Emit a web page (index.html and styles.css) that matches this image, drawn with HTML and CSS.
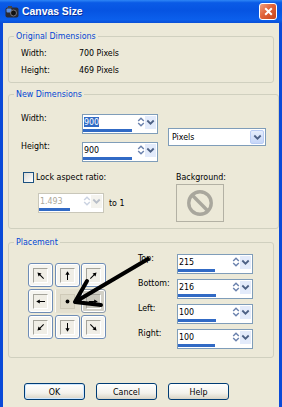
FILE: index.html
```html
<!DOCTYPE html>
<html>
	<head>
		<meta charset="UTF-8">
		<title>Canvas Size</title>
		<link rel="stylesheet" href="styles.css">
	</head>
	<body>
		<svg class="defs" width="0" height="0">
			<defs>
				<symbol id="arr" viewBox="0 0 11 11">
					<path d="M5.5 10V4" stroke="#000" stroke-width="1"/>
					<path d="M5.5 1.2L3.4 4.8H7.6Z" fill="#000"/>
				</symbol>
				<symbol id="updown" viewBox="0 0 8 12">
					<path d="M1.2 5L4 2.2L6.8 5M1.2 7L4 9.8L6.8 7" fill="none" stroke="#6b82ad" stroke-width="1.4"/>
				</symbol>
				<symbol id="chev" viewBox="0 0 9 7">
					<path d="M1.3 1.5L4.5 4.7L7.7 1.5" fill="none" stroke="#4d6185" stroke-width="1.8"/>
				</symbol>
			</defs>
		</svg>

		<div class="titlebar">
			<svg class="app-icon" viewBox="0 0 14 12">
				<rect x="0.5" y="1.5" width="13" height="10" rx="2" fill="#2b2b33"/>
				<rect x="1.5" y="2.5" width="5" height="4" rx="1" fill="#5d8fe0"/>
				<circle cx="8.5" cy="7" r="3" fill="#111" stroke="#8a8a96" stroke-width="0.8"/>
				<rect x="3" y="0" width="4" height="2" fill="#444"/>
			</svg>
			<span class="title">Canvas Size</span>
			<button class="close" type="button">
				<svg viewBox="0 0 10 10"><path d="M2 2L8 8M8 2L2 8" stroke="#fff" stroke-width="1.8"/></svg>
			</button>
		</div>

		<div class="client">
			<fieldset class="group orig">
				<legend>Original Dimensions</legend>
				<div class="info-row"><span class="lbl">Width:</span><span>700 Pixels</span></div>
				<div class="info-row"><span class="lbl">Height:</span><span>469 Pixels</span></div>
			</fieldset>

			<fieldset class="group newdim">
				<legend>New Dimensions</legend>
				<div class="dim-top">
					<div class="dim-fields">
						<div class="field-row">
							<label class="dim-lbl">Width:</label>
							<div class="spin">
								<div class="spin-top">
									<span class="spin-val"><span class="sel">900</span></span>
									<svg class="spin-ud"><use href="#updown"/></svg>
									<span class="spin-drop"><svg><use href="#chev"/></svg></span>
								</div>
								<span class="bar" style="width:49px"></span>
							</div>
						</div>
						<div class="field-row">
							<label class="dim-lbl">Height:</label>
							<div class="spin">
								<div class="spin-top">
									<span class="spin-val">900</span>
									<svg class="spin-ud"><use href="#updown"/></svg>
									<span class="spin-drop"><svg><use href="#chev"/></svg></span>
								</div>
								<span class="bar" style="width:49px"></span>
							</div>
						</div>
					</div>
					<div class="select">
						<span class="select-val">Pixels</span>
						<span class="select-btn"><svg><use href="#chev"/></svg></span>
					</div>
				</div>

				<div class="dim-bottom">
					<div class="lock">
						<label class="check"><span class="box"></span>Lock aspect ratio:</label>
						<div class="ratio-row">
							<div class="spin off">
								<div class="spin-top">
									<span class="spin-val">1.493</span>
									<svg class="spin-ud"><use href="#updown"/></svg>
									<span class="spin-drop"><svg><use href="#chev"/></svg></span>
								</div>
								<span class="bar" style="width:31px"></span>
							</div>
							<span class="to">to 1</span>
						</div>
					</div>
					<div class="bgpick">
						<div>Background:</div>
						<div class="bg-box">
							<svg viewBox="0 0 32 32"><circle cx="16" cy="16" r="12" fill="none" stroke="#a9a79d" stroke-width="3.6"/><path d="M7.8 7.8L24.2 24.2" stroke="#a9a79d" stroke-width="3.6"/></svg>
						</div>
					</div>
				</div>
			</fieldset>

			<fieldset class="group placement">
				<legend>Placement</legend>
				<div class="place-body">
					<div class="anchor-grid">
						<div class="anchor"><span class="cell"><svg><use href="#arr" transform="rotate(-45 5.5 5.5)"/></svg></span></div>
						<div class="anchor"><span class="cell"><svg><use href="#arr"/></svg></span></div>
						<div class="anchor"><span class="cell"><svg><use href="#arr" transform="rotate(45 5.5 5.5)"/></svg></span></div>
						<div class="anchor"><span class="cell"><svg><use href="#arr" transform="rotate(-90 5.5 5.5)"/></svg></span></div>
						<div class="anchor on"><span class="cell"><svg viewBox="0 0 11 11"><circle cx="5.5" cy="5.5" r="1.9" fill="#000"/></svg></span></div>
						<div class="anchor dim"><span class="cell"><svg><use href="#arr" transform="rotate(90 5.5 5.5)"/></svg></span></div>
						<div class="anchor"><span class="cell"><svg><use href="#arr" transform="rotate(-135 5.5 5.5)"/></svg></span></div>
						<div class="anchor"><span class="cell"><svg><use href="#arr" transform="rotate(180 5.5 5.5)"/></svg></span></div>
						<div class="anchor"><span class="cell"><svg><use href="#arr" transform="rotate(135 5.5 5.5)"/></svg></span></div>
					</div>
					<div class="offsets">
						<div class="field-row">
							<label class="off-lbl">Top:</label>
							<div class="spin">
								<div class="spin-top">
									<span class="spin-val">215</span>
									<svg class="spin-ud"><use href="#updown"/></svg>
									<span class="spin-drop"><svg><use href="#chev"/></svg></span>
								</div>
								<span class="bar" style="width:37px"></span>
							</div>
						</div>
						<div class="field-row">
							<label class="off-lbl">Bottom:</label>
							<div class="spin">
								<div class="spin-top">
									<span class="spin-val">216</span>
									<svg class="spin-ud"><use href="#updown"/></svg>
									<span class="spin-drop"><svg><use href="#chev"/></svg></span>
								</div>
								<span class="bar" style="width:38px"></span>
							</div>
						</div>
						<div class="field-row">
							<label class="off-lbl">Left:</label>
							<div class="spin">
								<div class="spin-top">
									<span class="spin-val">100</span>
									<svg class="spin-ud"><use href="#updown"/></svg>
									<span class="spin-drop"><svg><use href="#chev"/></svg></span>
								</div>
								<span class="bar" style="width:38px"></span>
							</div>
						</div>
						<div class="field-row">
							<label class="off-lbl">Right:</label>
							<div class="spin">
								<div class="spin-top">
									<span class="spin-val">100</span>
									<svg class="spin-ud"><use href="#updown"/></svg>
									<span class="spin-drop"><svg><use href="#chev"/></svg></span>
								</div>
								<span class="bar" style="width:37px"></span>
							</div>
						</div>
					</div>
					<!-- annotation arrow drawn over the dialog -->
					<svg class="pointer" viewBox="0 0 140 70">
						<path d="M127 11L54 54M54 54L80 57M54 54L66 33" fill="none" stroke="#000" stroke-width="4" stroke-linecap="round"/>
					</svg>
				</div>
			</fieldset>

			<div class="actions">
				<button class="btn default" type="button">OK</button>
				<button class="btn" type="button">Cancel</button>
				<button class="btn" type="button">Help</button>
			</div>
		</div>
	</body>
</html>
```

FILE: styles.css
```css
*{
	margin: 0;
	padding: 0;
	box-sizing: border-box;
}
body{
	width: 282px;
	height: 407px;
	overflow: hidden;
	background-color: #ece9d8;
	font-family: "DejaVu Sans", sans-serif;
	font-stretch: condensed;
	font-size: 8.8px;
	color: #000;
}
.defs{
	position: absolute;
}
svg{
	display: block;
}

/* title bar */
.titlebar{
	display: flex;
	align-items: center;
	height: 23px;
	padding: 0 5px;
	background: linear-gradient(#2e86f6, #0a5be6 12%, #0654e2 45%, #0b5fec 85%, #0a4fd6 100%);
	color: #fff;
}
.app-icon{
	width: 14px;
	height: 12px;
	margin-top: 1px;
}
.title{
	margin-left: 3px;
	font-family: "Liberation Sans", sans-serif;
	font-stretch: normal;
	font-size: 10.4px;
	font-weight: bold;
	text-shadow: 1px 1px 0 #0a2f9a;
}
.close{
	margin-left: auto;
	width: 18px;
	height: 17px;
	border: 1px solid #fff;
	border-radius: 3px;
	background: linear-gradient(135deg, #f0a080, #e0633a 45%, #c8461c);
	display: flex;
	align-items: center;
	justify-content: center;
}
.close svg{
	width: 11px;
	height: 11px;
}

/* client area */
.client{
	height: 384px;
	padding: 7px 5px 0;
	border-left: 3px solid #0a4ad8;
	border-right: 3px solid #0a4ad8;
}
.group{
	border: 1px solid #d0d0bf;
	border-radius: 3px;
	padding: 3px 12px;
}
.group legend{
	margin-left: -7px;
	padding: 0 2px;
	line-height: 12px;
	color: #0046d5;
}
.info-row{
	display: flex;
	line-height: 17px;
}
.info-row .lbl{
	width: 58px;
}

/* spin fields */
.field-row{
	display: flex;
	align-items: flex-start;
}
.dim-lbl{
	width: 61px;
	line-height: 9px;
}
.off-lbl{
	width: 39px;
	line-height: 9px;
}
.spin{
	display: flex;
	flex-direction: column;
	width: 76px;
	height: 20px;
	border: 1px solid #7f9db9;
	background-color: #fff;
}
.spin-top{
	display: flex;
	align-items: center;
	height: 14px;
}
.spin-val{
	flex: 1;
	padding-left: 1px;
	line-height: 13px;
}
.sel{
	background-color: #316ac5;
	color: #fff;
}
.spin-ud{
	width: 8px;
	height: 12px;
}
.spin-drop{
	display: flex;
	align-items: center;
	justify-content: center;
	width: 11px;
	height: 13px;
	margin-right: 1px;
	background-color: #e3ebfb;
}
.spin-drop svg{
	width: 9px;
	height: 7px;
}
.bar{
	display: block;
	height: 3px;
	margin-top: auto;
	margin-bottom: 1px;
	background-color: #316ac5;
}
.spin.off{
	width: 66px;
	border-color: #c9c7ba;
}
.spin.off .spin-val{
	color: #aca899;
}
.spin.off .spin-ud,
.spin.off .spin-drop svg{
	opacity: 0.35;
}
.spin.off .spin-drop{
	background-color: #f4f3ee;
}

/* new dimensions */
.newdim{
	margin-top: 5px;
	padding: 14px 12px 6px;
}
.dim-top{
	display: flex;
	align-items: center;
}
.dim-fields{
	display: flex;
	flex-direction: column;
	gap: 8px;
}
.select{
	display: flex;
	align-items: center;
	width: 98px;
	height: 18px;
	margin-left: 10px;
	margin-top: -2px;
	border: 1px solid #7f9db9;
	background-color: #fff;
}
.select-val{
	flex: 1;
	padding-left: 3px;
}
.select-btn{
	display: flex;
	align-items: center;
	justify-content: center;
	width: 14px;
	height: 14px;
	margin-right: 1px;
	border: 1px solid #bacdf5;
	border-radius: 2px;
	background: linear-gradient(#e6eefc, #c6d6f8);
}
.select-btn svg{
	width: 9px;
	height: 7px;
}
.dim-bottom{
	display: flex;
	margin-top: 9px;
}
.lock{
	width: 153px;
	margin-left: 2px;
}
.check{
	display: flex;
	align-items: center;
	line-height: 12px;
}
.box{
	width: 11px;
	height: 11px;
	margin-right: 2px;
	border: 1px solid #1c5180;
	background: linear-gradient(135deg, #dcdbd5, #fff);
}
.ratio-row{
	display: flex;
	align-items: center;
	margin: 10px 0 0 15px;
}
.to{
	margin-left: 5px;
}
.bgpick{
	line-height: 12px;
}
.bg-box{
	display: flex;
	align-items: center;
	justify-content: center;
	width: 48px;
	height: 38px;
	margin-top: 1px;
	border: 1px solid #b3b1a4;
	background-color: #ece9d8;
}
.bg-box svg{
	width: 30px;
	height: 30px;
}

/* placement */
.placement{
	margin-top: 7px;
	padding: 0 12px 8px;
}
.place-body{
	position: relative;
	display: flex;
	align-items: flex-start;
}
.anchor-grid{
	display: grid;
	grid-template-columns: repeat(3, 25px);
	grid-template-rows: repeat(3, 24px);
	gap: 2px 1.5px;
	margin: 15px 0 0 7px;
}
.anchor{
	display: flex;
	align-items: center;
	justify-content: center;
	border: 1px solid #6f8db6;
	border-radius: 3px;
	background-color: #f6f5f0;
	box-shadow: inset 0 0 0 1px #fff;
}
.cell{
	display: flex;
	align-items: center;
	justify-content: center;
	width: 15px;
	height: 15px;
	border: 1px solid;
	border-color: #a5a49b #fff #fff #a5a49b;
	background-color: #f0eee6;
}
.cell svg{
	width: 11px;
	height: 11px;
}
.anchor.on{
	border-color: transparent;
	border-left-color: #fbfaf6;
	border-radius: 0;
	background-color: #e4e0d0;
	box-shadow: none;
}
.anchor.on .cell{
	border-color: #cfcab8;
	background-color: #dedac9;
}
.anchor.dim{
	background-color: #d2d0c6;
	border-color: #8f9cab;
}
.anchor.dim .cell{
	background-color: #cac8bd;
}
.offsets{
	display: flex;
	flex-direction: column;
	gap: 5px;
	margin: 6px 0 0 32px;
}
.pointer{
	position: absolute;
	left: 0;
	top: 0;
	width: 140px;
	height: 70px;
	overflow: visible;
}

/* buttons */
.actions{
	display: flex;
	gap: 11px;
	margin: 25px 0 0 16px;
}
.btn{
	width: 61px;
	height: 17px;
	border: 1px solid #003c74;
	border-radius: 3px;
	background: linear-gradient(#fff, #f3f2ec 60%, #d8d4c6);
	font: inherit;
	color: #000;
}
.btn.default{
	box-shadow: inset 0 0 0 1px #cee7ff;
}
```
